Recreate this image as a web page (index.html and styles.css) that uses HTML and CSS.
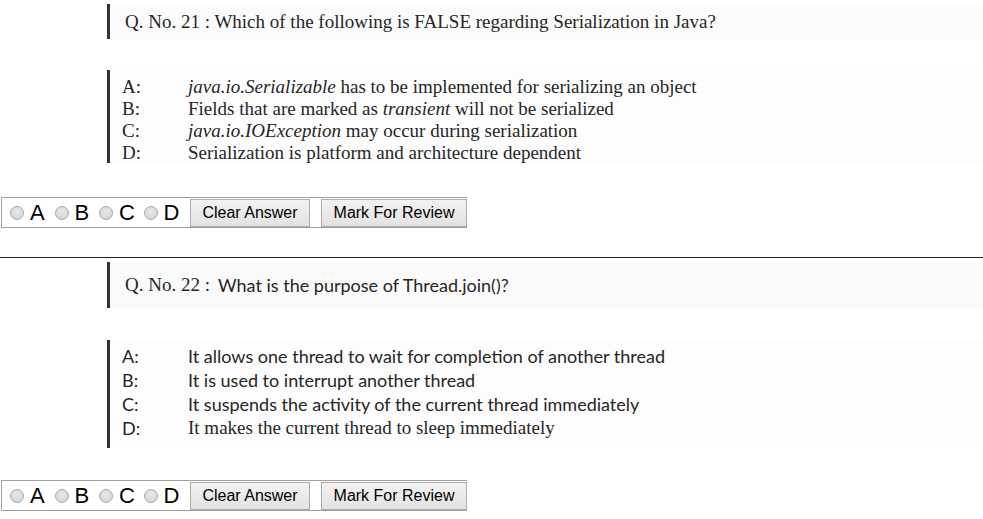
FILE: index.html
```html
<!DOCTYPE html>
<html>
<head>
<meta charset="utf-8">
<link rel="stylesheet" href="styles.css">
</head>
<body>
<div class="question q21">
  <div class="q-head serif">Q. No. 21 : Which of the following is FALSE regarding Serialization in Java?</div>
  <div class="opts serif">
    <div class="opt"><span class="lbl">A:</span><span><i>java.io.Serializable</i> has to be implemented for serializing an object</span></div>
    <div class="opt"><span class="lbl">B:</span><span>Fields that are marked as <i>transient</i> will not be serialized</span></div>
    <div class="opt"><span class="lbl">C:</span><span><i>java.io.IOException</i> may occur during serialization</span></div>
    <div class="opt"><span class="lbl">D:</span><span>Serialization is platform and architecture dependent</span></div>
  </div>
</div>
<div class="answer">
  <label class="choice"><input type="radio" name="q21"><span>A</span></label>
  <label class="choice"><input type="radio" name="q21"><span>B</span></label>
  <label class="choice"><input type="radio" name="q21"><span>C</span></label>
  <label class="choice"><input type="radio" name="q21"><span>D</span></label>
  <button class="btn btn-clear">Clear Answer</button>
  <button class="btn btn-mark">Mark For Review</button>
</div>
<hr class="sep">
<div class="question q22">
  <div class="q-head"><span class="serif">Q. No. 22 :</span><span class="sans q-text">What is the purpose of Thread.join()?</span></div>
  <div class="opts">
    <div class="opt sans"><span class="lbl">A:</span><span>It allows one thread to wait for completion of another thread</span></div>
    <div class="opt sans"><span class="lbl">B:</span><span>It is used to interrupt another thread</span></div>
    <div class="opt sans"><span class="lbl">C:</span><span>It suspends the activity of the current thread immediately</span></div>
    <div class="opt"><span class="lbl sans">D:</span><span class="serif">It makes the current thread to sleep immediately</span></div>
  </div>
</div>
<div class="answer">
  <label class="choice"><input type="radio" name="q22"><span>A</span></label>
  <label class="choice"><input type="radio" name="q22"><span>B</span></label>
  <label class="choice"><input type="radio" name="q22"><span>C</span></label>
  <label class="choice"><input type="radio" name="q22"><span>D</span></label>
  <button class="btn btn-clear">Clear Answer</button>
  <button class="btn btn-mark">Mark For Review</button>
</div>
</body>
</html>
```
FILE: styles.css
```css
html, body {
  margin: 0;
  padding: 0;
  background: #ffffff;
}
body {
  width: 983px;
  color: #262626;
}
.serif {
  font-family: "Liberation Serif", "Times New Roman", serif;
  font-size: 19px;
}
.sans {
  font-family: Lato, "Open Sans", sans-serif;
  font-size: 18px;
}
.question {
  display: flex;
  flex-direction: column;
  margin-left: 107px;
  width: 876px;
}
.q-head {
  border-left: 3px solid #333;
  display: flex;
  align-items: center;
  padding-left: 15px;
  white-space: nowrap;
  background: #fbfbfb;
}
.q-text {
  margin-left: 8px;
}
.opts {
  border-left: 3px solid #333;
  display: flex;
  flex-direction: column;
  padding-left: 12px;
  box-sizing: border-box;
  background: #fdfdfd;
}
.opt {
  display: flex;
  white-space: nowrap;
}
.lbl {
  width: 66px;
  flex: none;
}
.q21 {
  margin-top: 4px;
}
.q21 .q-head {
  height: 35px;
}
.q21 .opts {
  margin-top: 31px;
  height: 93px;
  padding-top: 6px;
  line-height: 22px;
}
.q22 {
  margin-top: 4px;
}
.q22 .q-head {
  height: 46px;
  background: #fafafa;
}
.q22 .opts {
  margin-top: 32px;
  height: 108px;
  padding-top: 4px;
  line-height: 24px;
}
.answer {
  display: flex;
  align-items: center;
  margin-left: 1px;
  width: 466px;
  height: 31px;
  border: 1px solid #a0a0a0;
  border-right: none;
  padding-left: 8px;
  box-sizing: border-box;
  font-family: "Liberation Sans", Arial, sans-serif;
}
.q21 + .answer {
  margin-top: 34px;
}
.q22 + .answer {
  margin-top: 32px;
}
.choice {
  display: flex;
  align-items: center;
  font-size: 22px;
  color: #000;
  width: 44.5px;
  flex: none;
}
.choice:nth-child(4) {
  width: 46.5px;
}
.choice input {
  appearance: none;
  -webkit-appearance: none;
  width: 14px;
  height: 14px;
  margin: 0 6px 0 0;
  border-radius: 50%;
  border: 1px solid #a8a8a8;
  background: radial-gradient(circle at 50% 40%, #e9e9e9 0%, #d8d8d8 65%, #cdcdcd 100%);
  box-sizing: border-box;
  flex: none;
}
.btn {
  font-family: "Liberation Sans", Arial, sans-serif;
  font-size: 16px;
  color: #000;
  height: 28px;
  padding: 0 10px;
  border: 1px solid #acacac;
  border-radius: 0;
  background: linear-gradient(#f2f2f2, #e2e2e2);
  flex: none;
}
.btn-clear {
  width: 120px;
  margin-right: 11px;
}
.btn-mark {
  width: 146px;
}
.sep {
  margin: 29px 0 0 0;
  border: none;
  border-top: 1px solid #222;
  height: 0;
}
```
